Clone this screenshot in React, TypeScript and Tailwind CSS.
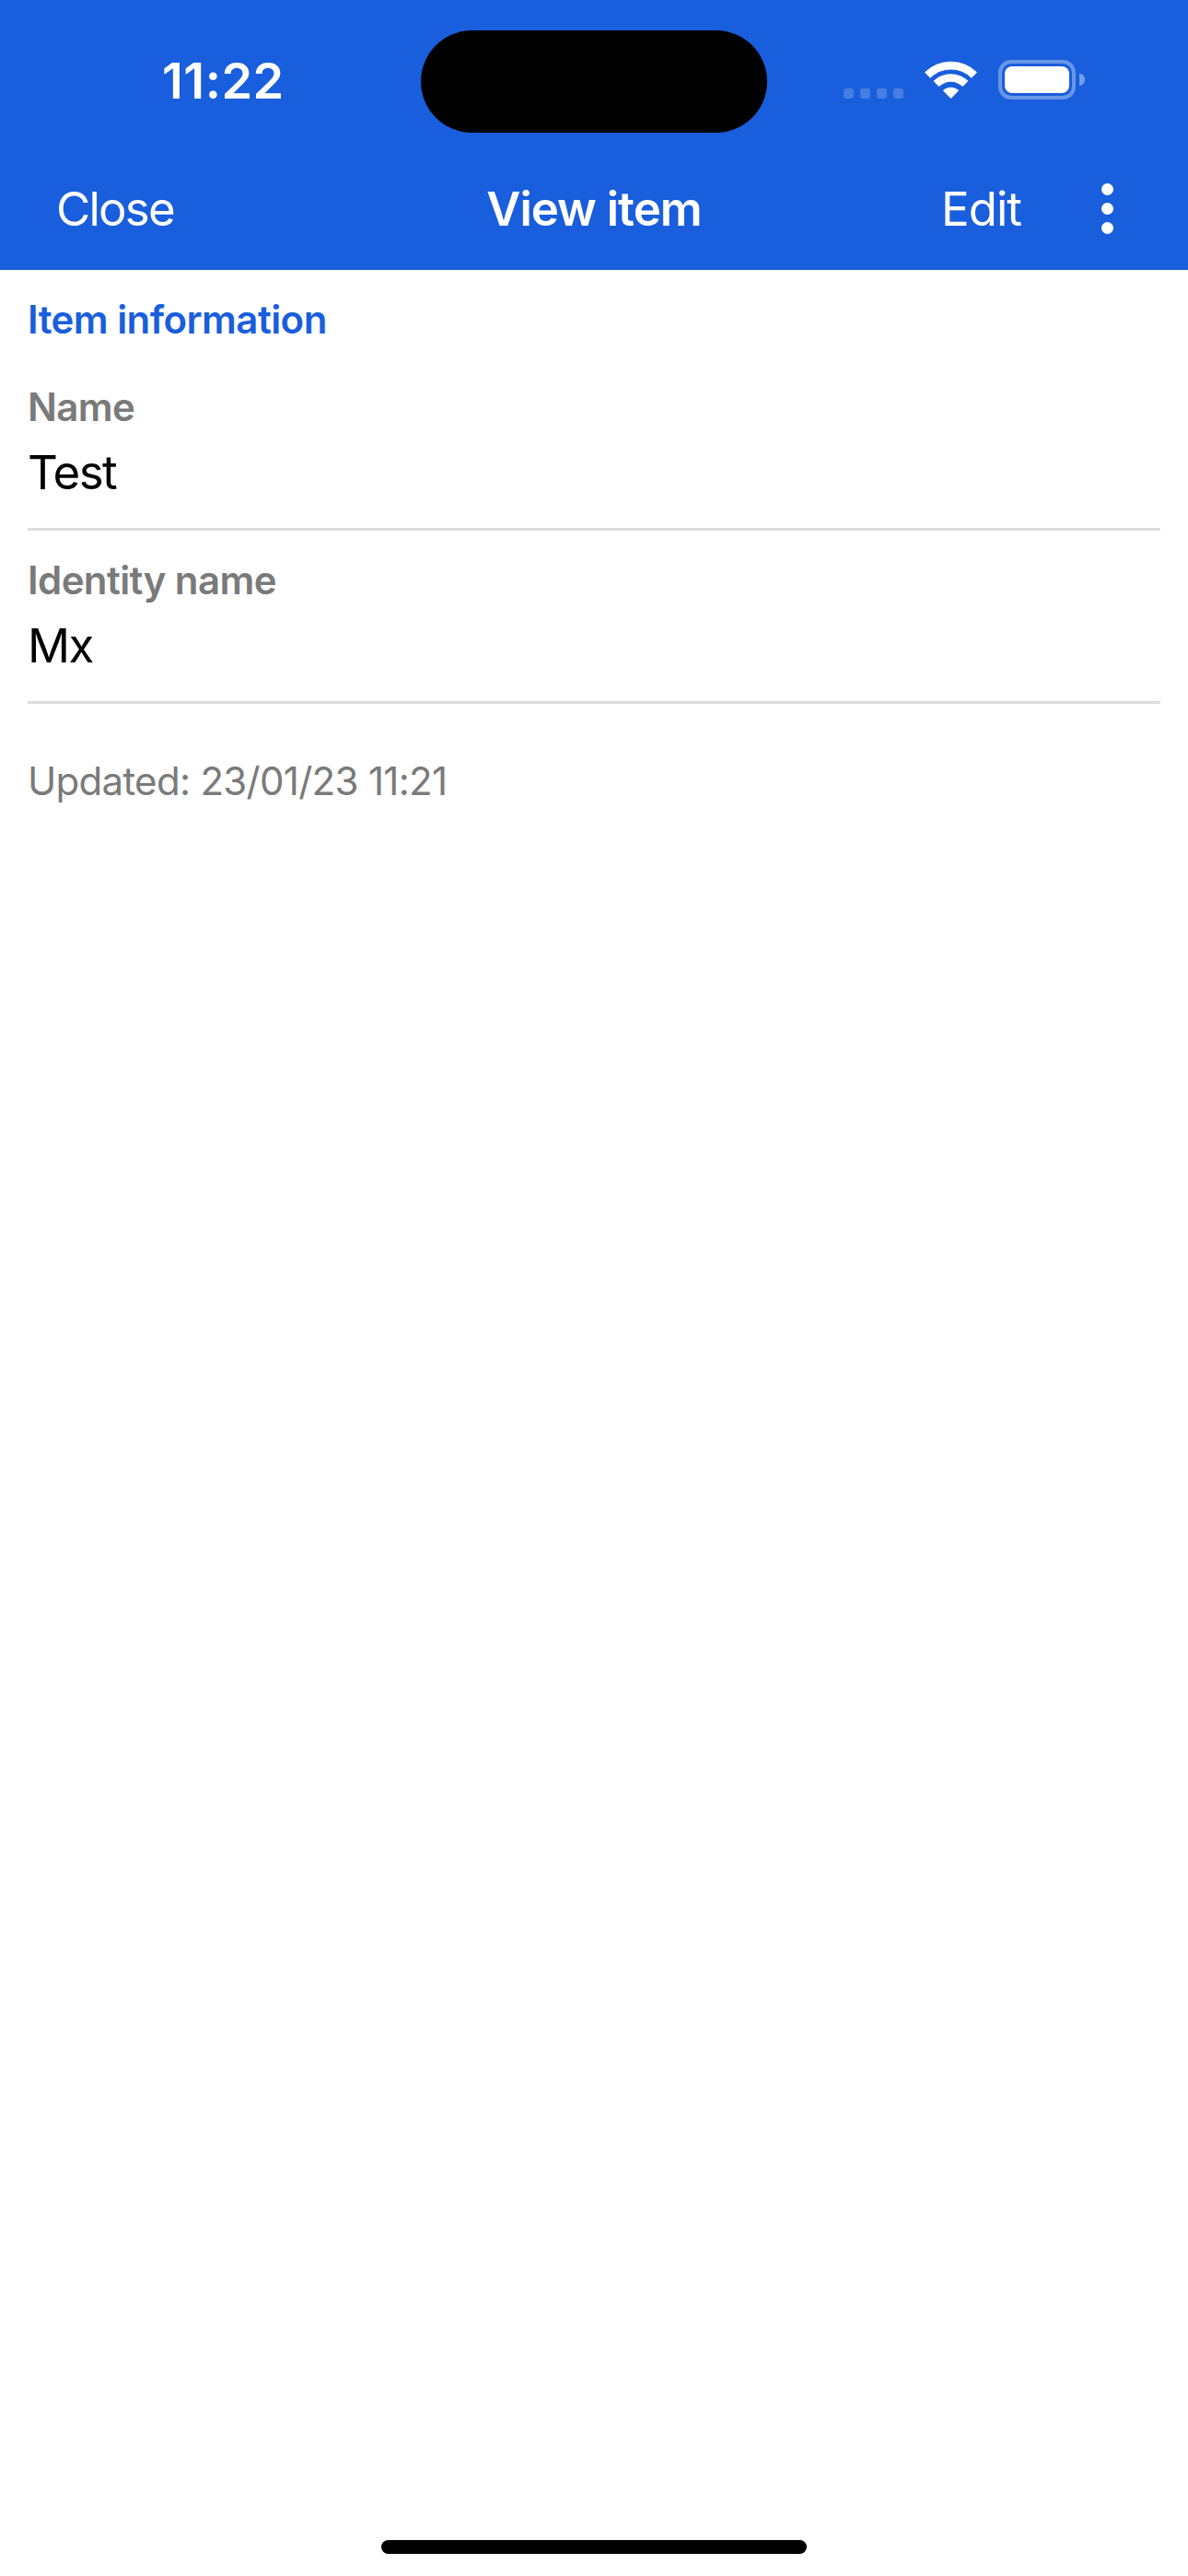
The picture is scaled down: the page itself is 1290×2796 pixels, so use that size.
const fields = [
  { label: "Name", value: "Test" },
  { label: "Identity name", value: "Mx" },
];

function WifiIcon() {
  return (
    <svg width="57" height="41" viewBox="0 0 57 41" fill="white">
      <path d="M0 12.4A40.5 40.5 0 0 1 57 12.4L50.8 18.7A31.5 31.5 0 0 0 6.2 18.7Z" />
      <path d="M9.6 22.1A26.7 26.7 0 0 1 47.4 22.1L41.4 28.1A18.3 18.3 0 0 0 15.6 28.1Z" />
      <path d="M19.8 32.3A12.3 12.3 0 0 1 37.2 32.3L28.5 41Z" />
    </svg>
  );
}

function Battery() {
  return (
    <div className="flex items-center gap-[4px]">
      <div className="w-[84px] h-[43px] rounded-[14px] border-[4px] border-white/35 p-[3px]">
        <div className="w-full h-full rounded-[8px] bg-white" />
      </div>
      <div className="w-[6px] h-[13px] rounded-r-full bg-white/40" />
    </div>
  );
}

function StatusBar() {
  return (
    <div className="grid grid-cols-[1fr_376px_1fr] h-[111px]">
      <div className="pl-[176px] pt-[5px] text-[54px] leading-[100px] font-semibold tracking-[0.5px]">11:22</div>
      <div className="bg-black rounded-[56px]" />
      <div className="flex items-start pl-[83px] pt-[33px]">
        <div className="flex gap-[7px] mt-[30px] mr-[23px]">
          {[0, 1, 2, 3].map((i) => (
            <div key={i} className="w-[11px] h-[11px] rounded-[3px] bg-white/20" />
          ))}
        </div>
        <WifiIcon />
        <div className="ml-[23px] -mt-[1px]">
          <Battery />
        </div>
      </div>
    </div>
  );
}

export default function App() {
  return (
    <div className="w-[1290px] h-[2796px] flex flex-col bg-white font-['Inter',sans-serif]">
      <header className="h-[293px] pt-[33px] bg-[#195edc] text-white">
        <StatusBar />
        <nav className="grid grid-cols-[1fr_auto_1fr] items-center h-[149px] pt-[16px] px-[61px] text-[51px] leading-[60px]">
          <button className="justify-self-start tracking-[-1.8px]">Close</button>
          <h1 className="font-semibold tracking-[-1px]">View item</h1>
          <div className="flex items-center justify-end gap-[87px] pr-[20px]">
            <button className="tracking-[-1px]">Edit</button>
            <div className="flex flex-col gap-[8px]">
              <span className="w-[13px] h-[13px] rounded-full bg-white" />
              <span className="w-[13px] h-[13px] rounded-full bg-white" />
              <span className="w-[13px] h-[13px] rounded-full bg-white" />
            </div>
          </div>
        </nav>
      </header>

      <main className="px-[30px] pt-[29px]">
        <h2 className="text-[42px] leading-[50px] font-semibold tracking-[-0.55px] text-[#195edc] mb-[45px]">Item information</h2>
        {fields.map((field) => (
          <div key={field.label} className="border-b-[3px] border-[#dcdcdc] pb-[30px] mb-[29px]">
            <div className="text-[42px] leading-[50px] font-semibold tracking-[-0.6px] text-[#7a7a7a]">{field.label}</div>
            <div className="mt-[16px] text-[51px] leading-[60px] tracking-[-1.5px] text-black">{field.value}</div>
          </div>
        ))}
        <p className="pt-[30px] text-[42px] leading-[50px] tracking-[-0.7px] text-[#7a7a7a]">Updated: 23/01/23 11:21</p>
      </main>

      <div className="mt-auto mb-[24px] mx-auto w-[462px] h-[15px] rounded-full bg-black" />
    </div>
  );
}
